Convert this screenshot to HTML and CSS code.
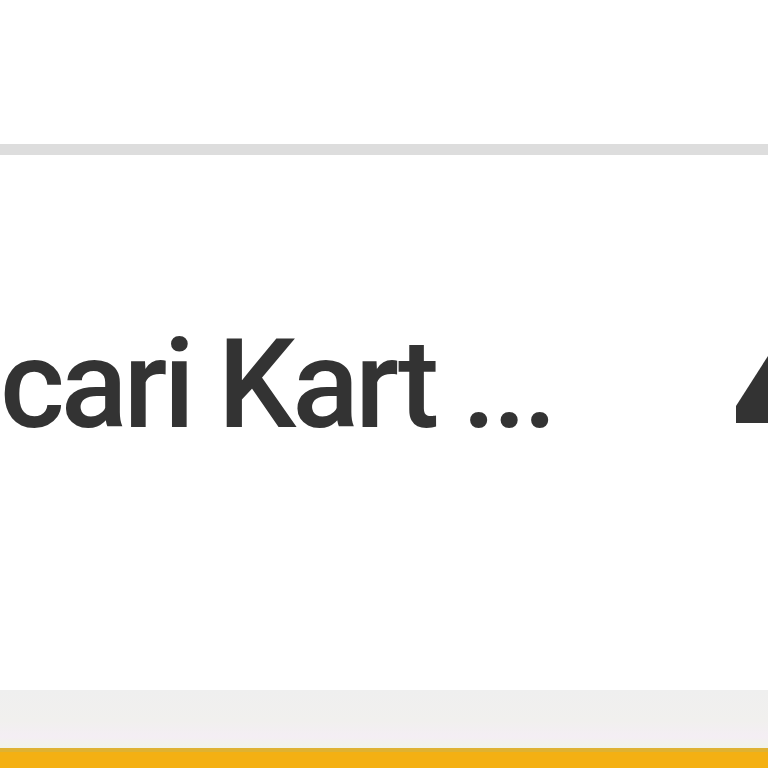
FILE: index.html
```html
<!DOCTYPE html>
<html lang="en">
<head>
  <meta charset="UTF-8" />
  <title>Kart</title>
  <meta name="viewport" content="width=device-width, initial-scale=1.0" />
  <link rel="stylesheet" href="styles.css">
</head>
<body>
  <div class="top"></div>
  <div class="row">
    <span class="title">cari Kart ...</span>
    <svg class="icon" width="38" height="100" viewBox="0 0 38 100">
      <polygon points="6,93 6,76 45,15 45,93" fill="#333" />
    </svg>
  </div>
  <div class="footer">
    <div class="stripe"></div>
  </div>
</body>
</html>
```

FILE: styles.css
```css
body {
  margin: 0;
  width: 768px;
  height: 768px;
  overflow: hidden;
  background: #fff;
  font-family: Roboto, "Liberation Sans", sans-serif;
}

.top {
  height: 144px;
  border-bottom: 11px solid #dddddd;
}

.row {
  height: 535px;
  display: flex;
  align-items: flex-start;
  padding-top: 168px;
  box-sizing: border-box;
}

.title {
  font-size: 124px;
  font-weight: 500;
  line-height: 1;
  letter-spacing: -4px;
  color: #333;
  white-space: nowrap;
}

.icon {
  margin-left: auto;
  margin-top: 7px;
  flex-shrink: 0;
}

.footer {
  height: 78px;
  background: linear-gradient(#efefef, #f1f0ee 40%, #f4eef4 60%, #f1f3ea 72%, #f7ecf3 85%, #fbf4dc);
  display: flex;
  flex-direction: column;
  justify-content: flex-end;
}

.stripe {
  height: 20px;
  border-top: 4px solid #dfb232;
  background: #f4b013;
  box-sizing: border-box;
}
```
